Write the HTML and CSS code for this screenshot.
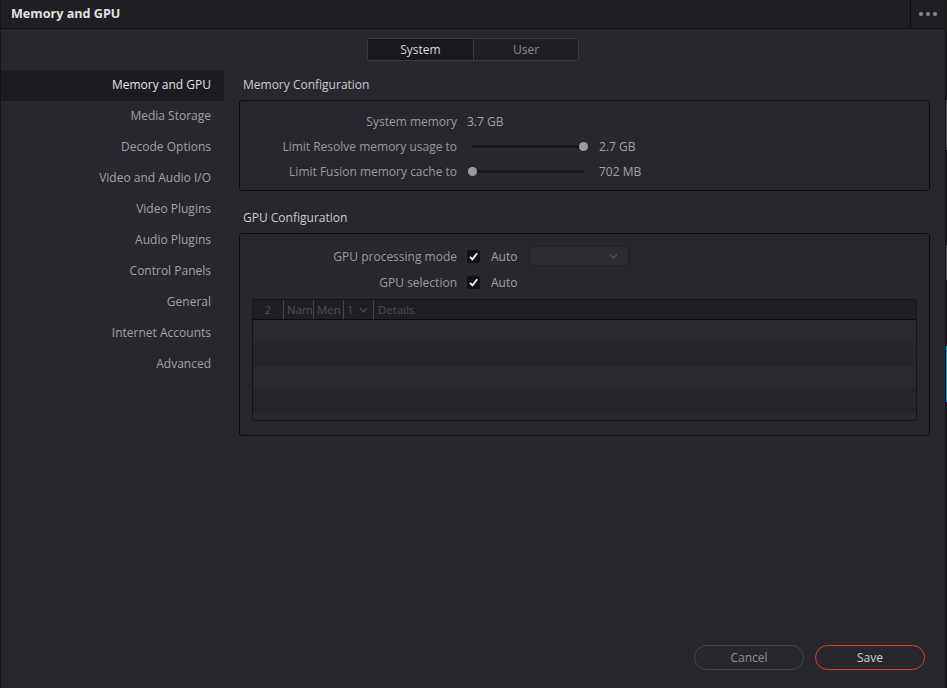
FILE: index.html
```html
<!DOCTYPE html>
<html>
<head>
<meta charset="utf-8">
<link rel="stylesheet" href="styles.css">
</head>
<body>
<div class="dialog">
  <header class="titlebar">
    <span class="title">Memory and GPU</span>
    <div class="more"><span class="dot"></span><span class="dot"></span><span class="dot"></span></div>
  </header>
  <div class="tabs-row">
    <div class="tabs">
      <div class="tab active">System</div>
      <div class="tab">User</div>
    </div>
  </div>
  <div class="main">
    <nav class="sidebar">
      <div class="nav-item selected">Memory and GPU</div>
      <div class="nav-item">Media Storage</div>
      <div class="nav-item">Decode Options</div>
      <div class="nav-item">Video and Audio I/O</div>
      <div class="nav-item">Video Plugins</div>
      <div class="nav-item">Audio Plugins</div>
      <div class="nav-item">Control Panels</div>
      <div class="nav-item">General</div>
      <div class="nav-item">Internet Accounts</div>
      <div class="nav-item">Advanced</div>
    </nav>
    <section class="content">
      <div class="section-title">Memory Configuration</div>
      <div class="box mem-box">
        <div class="row">
          <span class="label">System memory</span>
          <span class="value">3.7 GB</span>
        </div>
        <div class="row">
          <span class="label">Limit Resolve memory usage to</span>
          <div class="slider"><div class="track"></div><div class="thumb thumb-end"></div></div>
          <span class="value">2.7 GB</span>
        </div>
        <div class="row">
          <span class="label">Limit Fusion memory cache to</span>
          <div class="slider"><div class="track"></div><div class="thumb thumb-start"></div></div>
          <span class="value">702 MB</span>
        </div>
      </div>
      <div class="section-title gap">GPU Configuration</div>
      <div class="box gpu-box">
        <div class="row gpu-row">
          <span class="label">GPU processing mode</span>
          <span class="check"><svg viewBox="0 0 13 13" width="13" height="13"><path d="M3 6.8 L5.4 9.3 L10.2 3.2" fill="none" stroke="#f2f2f2" stroke-width="1.8"/></svg></span>
          <span class="value auto">Auto</span>
          <div class="dropdown"><svg viewBox="0 0 10 6" width="9" height="6"><path d="M1 1 L5 5 L9 1" fill="none" stroke="#5c5c62" stroke-width="1.2"/></svg></div>
        </div>
        <div class="row gpu-row">
          <span class="label">GPU selection</span>
          <span class="check"><svg viewBox="0 0 13 13" width="13" height="13"><path d="M3 6.8 L5.4 9.3 L10.2 3.2" fill="none" stroke="#f2f2f2" stroke-width="1.8"/></svg></span>
          <span class="value auto">Auto</span>
        </div>
        <div class="table">
          <div class="thead">
            <div class="th c-num">2</div>
            <div class="th c-sm">Nam</div>
            <div class="th c-sm">Men</div>
            <div class="th c-sm c-sort">1 <svg viewBox="0 0 10 6" width="9" height="6"><path d="M1 1 L5 5 L9 1" fill="none" stroke="#56565c" stroke-width="1.2"/></svg></div>
            <div class="th c-details">Details</div>
          </div>
          <div class="tr"></div>
          <div class="tr alt"></div>
          <div class="tr"></div>
          <div class="tr alt"></div>
          <div class="tr short"></div>
        </div>
      </div>
    </section>
  </div>
  <footer class="actions">
    <button class="btn cancel">Cancel</button>
    <button class="btn save">Save</button>
  </footer>
</div>
<div class="edge"><span class="edge-mark m1"></span><span class="edge-mark m2"></span><span class="edge-mark m3"></span></div>
</body>
</html>
```
FILE: styles.css
```css
* { box-sizing: border-box; }
html, body { margin: 0; padding: 0; }
body {
  width: 947px;
  height: 688px;
  background: #1c1c1f;
  font-family: "Open Sans", "Noto Sans", sans-serif;
  font-size: 12px;
  color: #9c9c9c;
  overflow: hidden;
  position: relative;
}
.dialog {
  width: 946px;
  height: 688px;
  background: #28272d;
  border-left: 1px solid #141416;
  border-right: 1px solid #141416;
  display: flex;
  flex-direction: column;
}
.titlebar {
  height: 29px;
  background: #1f1e23;
  border-bottom: 1px solid #0e0e10;
  display: flex;
  align-items: stretch;
}
.title {
  flex: 1;
  padding-left: 10px;
  line-height: 28px;
  font-weight: 700;
  font-size: 12.6px;
  color: #e2e2e2;
}
.more {
  width: 35px;
  border-left: 1px solid #0e0e10;
  display: flex;
  align-items: center;
  justify-content: center;
  gap: 3px;
}
.dot { width: 4px; height: 4px; border-radius: 50%; background: #8a8a8e; }
.tabs-row {
  height: 41px;
  display: flex;
  justify-content: center;
  align-items: flex-start;
  padding-top: 9px;
}
.tabs {
  display: flex;
  border: 1px solid #3a3a3f;
  border-radius: 2px;
  background: #1f1e23;
}
.tab {
  width: 105px;
  height: 21px;
  line-height: 21px;
  text-align: center;
  color: #8a8a8c;
}
.tab + .tab { border-left: 1px solid #3a3a3f; }
.tab.active { background: #19181c; color: #d8d8d8; }
.main { flex: 1; display: flex; }
.sidebar { width: 223px; display: flex; flex-direction: column; }
.nav-item {
  height: 31px;
  line-height: 30px;
  text-align: right;
  padding-right: 13px;
  color: #a2a2a4;
}
.nav-item.selected { background: #1c1b1f; color: #e4e4e4; }
.content { flex: 1; padding-left: 15px; padding-right: 15px; }
.section-title {
  height: 30px;
  line-height: 29px;
  padding-left: 4px;
  color: #cdcdcf;
}
.section-title.gap { margin-top: 12px; }
.box {
  border: 1px solid #0d0d0f;
  border-radius: 3px;
}
.mem-box { padding: 8px 0 6px; }
.row {
  height: 25px;
  display: grid;
  grid-template-columns: 217px auto auto 1fr;
  align-items: center;
  column-gap: 10px;
}
.label { text-align: right; color: #9a9a9c; }
.value { color: #a2a2a4; }
.slider { position: relative; width: 122px; height: 10px; }
.track {
  position: absolute; left: 5px; right: 5px; top: 3px; height: 3px;
  background: #18171b; border-radius: 2px;
}
.thumb {
  position: absolute; top: 0; width: 9px; height: 9px;
  border-radius: 50%; background: #9c9c9e;
}
.thumb-end { right: 1px; }
.thumb-start { left: 1px; }
.gpu-box { padding: 9px 12px 14px; }
.gpu-row {
  height: 26px;
  grid-template-columns: 205px 13px auto auto 1fr;
  column-gap: 10px;
}
.check {
  width: 13px; height: 13px; background: #121214; border-radius: 2px;
  display: flex;
}
.value.auto { margin-left: 1px; margin-right: 1px; }
.dropdown {
  width: 100px; height: 20px;
  margin-left: 1px;
  background: #2d2c32;
  border: 1px solid #222126;
  border-radius: 3px;
  display: flex; align-items: center; justify-content: flex-end;
  padding-right: 10px;
}
.table {
  margin-top: 4px;
  border: 1px solid #151518;
  border-radius: 2px;
  overflow: hidden;
}
.thead {
  height: 20px;
  background: #1f1e23;
  border-bottom: 1px solid #0d0d0f;
  display: flex;
  align-items: stretch;
  color: #4f4f55;
  font-size: 11.5px;
}
.th { line-height: 19px; white-space: nowrap; overflow: hidden; padding-left: 3px; }
.th + .th { border-left: 1px solid #44444a; }
.c-num { width: 30px; text-align: center; padding-left: 0; }
.c-sm { width: 30px; }
.c-sort { display: flex; align-items: center; gap: 5px; }
.c-details { flex: 1; padding-left: 4px; }
.tr { height: 23px; background: #2a292f; }
.tr.alt { background: #252429; }
.tr.short { height: 8px; }
.actions {
  height: 62px;
  display: flex;
  justify-content: flex-end;
  align-items: flex-start;
  gap: 11px;
  padding-top: 19px;
  padding-right: 20px;
}
.btn {
  width: 110px; height: 25px;
  border-radius: 13px;
  background: transparent;
  font-family: inherit;
  font-size: 12px;
  line-height: 22px;
}
.cancel { border: 1px solid #47464c; color: #8f8f92; }
.save { border: 1px solid #d8402e; color: #cfcfd1; }
.edge { position: absolute; right: 0; top: 0; width: 1px; height: 688px; }
.edge-mark { position: absolute; left: 0; width: 1px; }
.m1 { top: 100px; height: 50px; background: #55555a; }
.m2 { top: 245px; height: 35px; background: #55555a; }
.m3 { top: 346px; height: 56px; background: #1aa0c8; }
```
